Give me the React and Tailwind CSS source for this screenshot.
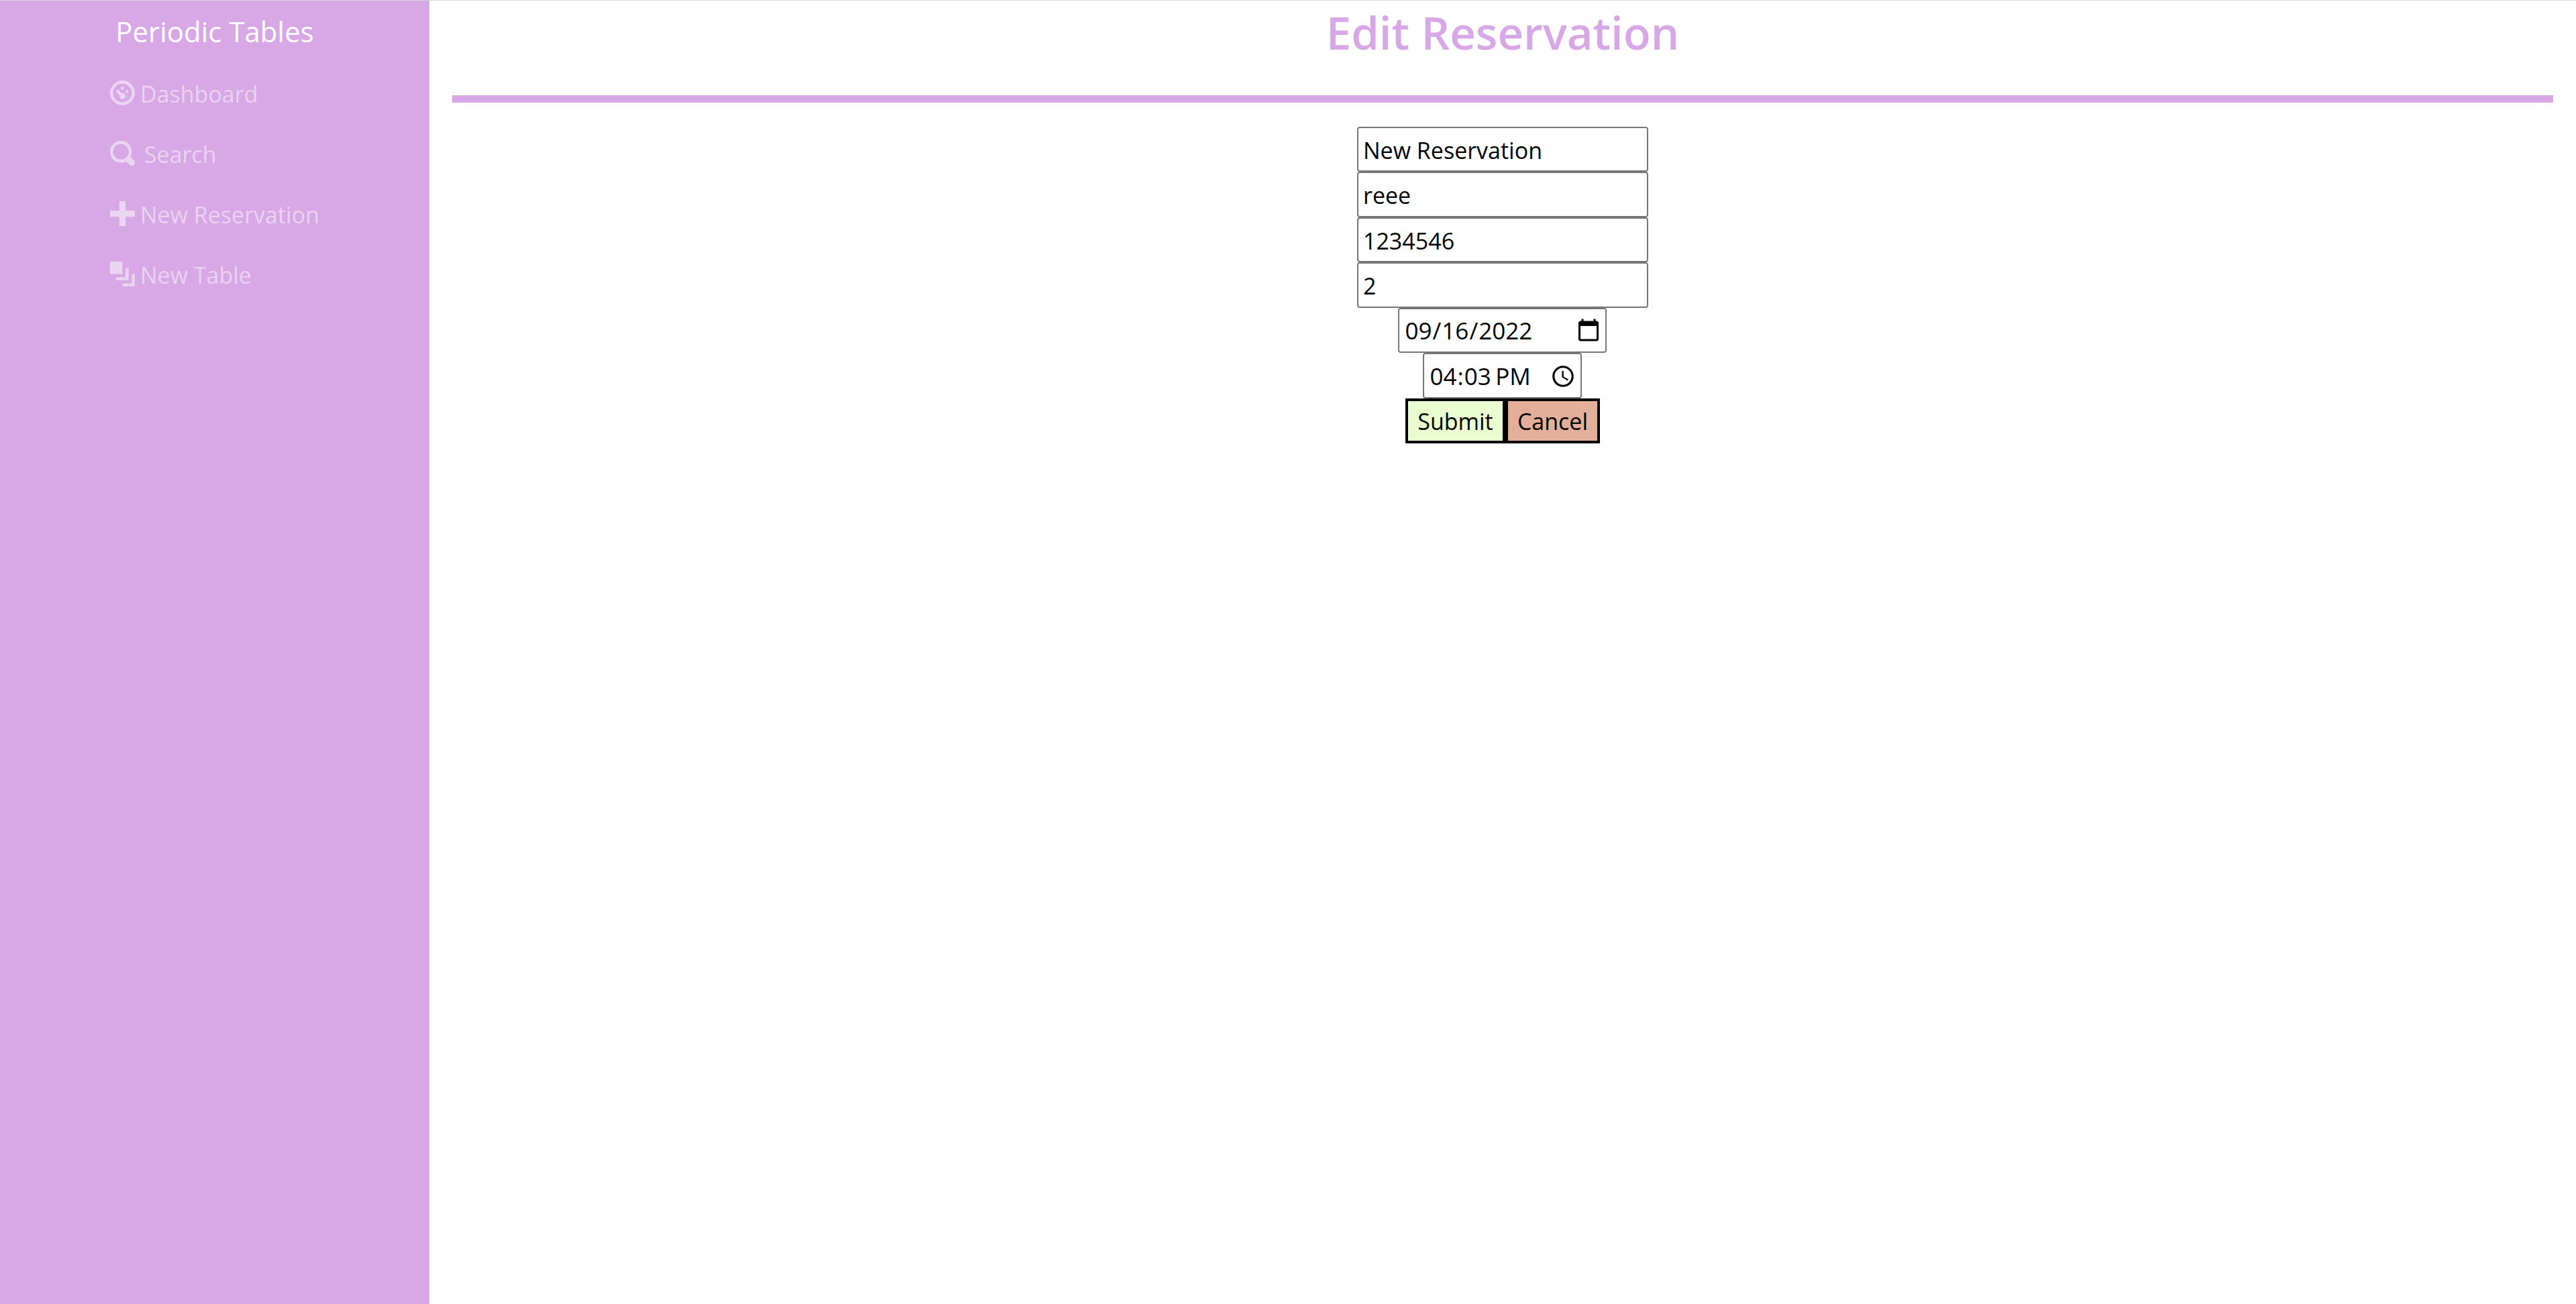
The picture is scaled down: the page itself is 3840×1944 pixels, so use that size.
import { useState } from "react";

const icons = {
  dashboard:
    "M4 0c-2.2 0-4 1.8-4 4s1.8 4 4 4 4-1.8 4-4-1.8-4-4-4zm0 1c1.66 0 3 1.34 3 3s-1.34 3-3 3-3-1.34-3-3 1.34-3 3-3zm0 1c-.28 0-.5.22-.5.5s.22.5.5.5.5-.22.5-.5-.22-.5-.5-.5zm-1.66 1a.5.5 0 0 0-.19.84l.91.91c-.02.08-.06.16-.06.25 0 .55.45 1 1 1s1-.45 1-1-.45-1-1-1c-.09 0-.17.04-.25.06l-.91-.91a.5.5 0 0 0-.44-.16.5.5 0 0 0-.06 0zm3.16 0c-.28 0-.5.22-.5.5s.22.5.5.5.5-.22.5-.5-.22-.5-.5-.5z",
  search:
    "M3.5 0c-1.93 0-3.5 1.57-3.5 3.5s1.57 3.5 3.5 3.5c.59 0 1.17-.14 1.66-.41a1 1 0 0 0 .13.13l1 1a1.02 1.02 0 1 0 1.44-1.44l-1-1a1 1 0 0 0-.16-.13c.27-.49.44-1.06.44-1.66 0-1.93-1.55-3.5-3.5-3.5zm0 1c1.39 0 2.5 1.11 2.5 2.5 0 .66-.24 1.27-.66 1.72-.01.01-.02.02-.03.03a1 1 0 0 0-.13.13c-.44.4-1.04.63-1.69.63-1.39 0-2.5-1.11-2.5-2.5s1.11-2.5 2.5-2.5z",
  plus: "M3 0v3h-3v2h3v3h2v-3h3v-2h-3v-3h-2z",
  layers: "M0 0v4h4v-4h-4zm5 2v3h-3v1h4v-4h-1zm2 2v3h-3v1h4v-4h-1z",
};

const links = [
  { label: "Dashboard", icon: "dashboard", gap: "gap-2" },
  { label: "Search", icon: "search", gap: "gap-[14px]" },
  { label: "New Reservation", icon: "plus", gap: "gap-2" },
  { label: "New Table", icon: "layers", gap: "gap-2" },
];

const fieldClass =
  "h-full rounded-[4px] border-2 border-[#767676] bg-white pl-[7px] pt-[2px] text-black";
const pickerClass =
  "pr-1 text-[35px] [&::-webkit-calendar-picker-indicator]:size-[38px]";

function Sidebar() {
  return (
    <aside className="w-1/6 shrink-0 bg-[#d8a8e6]">
      <nav className="flex flex-col items-center">
        <a href="#home" className="mt-[10px] text-[42px] leading-[72px] text-white">
          Periodic Tables
        </a>
        <ul className="mt-3">
          {links.map((link) => (
            <li key={link.label}>
              <a
                href="#page"
                className={`flex h-[90px] items-center text-white/50 ${link.gap}`}
              >
                <svg viewBox="0 0 8 8" fill="currentColor" className="mb-1 size-[37px]" aria-hidden="true">
                  <path d={icons[link.icon]} />
                </svg>
                {link.label}
              </a>
            </li>
          ))}
        </ul>
      </nav>
    </aside>
  );
}

export default function App() {
  const [form, setForm] = useState({
    first: "New Reservation",
    last: "reee",
    mobile: "1234546",
    people: "2",
    date: "2022-09-16",
    time: "16:03",
  });
  const bind = (name) => ({
    value: form[name],
    onChange: (e) => setForm({ ...form, [name]: e.target.value }),
  });

  return (
    <div className="flex min-h-screen border-t border-[#dadada] bg-white font-['Open_Sans','Noto_Sans',sans-serif] text-[34px] leading-[54px]">
      <Sidebar />
      <main className="min-w-0 grow px-[34px]">
        <h1 className="text-center text-[67px] leading-[94px] font-semibold text-[#d8a8e6]">
          Edit Reservation
        </h1>
        <hr className="mt-[47px] mb-9 h-[11px] border-0 bg-[#d8a8e6]" />
        <form
          className="grid h-[472px] grid-rows-7 justify-items-center"
          onSubmit={(e) => e.preventDefault()}
        >
          <input type="text" aria-label="First name" className={`w-[434px] ${fieldClass}`} {...bind("first")} />
          <input type="text" aria-label="Last name" className={`w-[434px] ${fieldClass}`} {...bind("last")} />
          <input type="tel" aria-label="Mobile number" className={`w-[434px] ${fieldClass}`} {...bind("mobile")} />
          <input type="text" inputMode="numeric" aria-label="People" className={`w-[434px] ${fieldClass}`} {...bind("people")} />
          <input type="date" aria-label="Date" className={`w-[311px] ${fieldClass} ${pickerClass}`} {...bind("date")} />
          <input type="time" aria-label="Time" className={`w-[237px] ${fieldClass} ${pickerClass}`} {...bind("time")} />
          <div className="flex h-full">
            <button type="submit" className="w-[149px] border-4 border-black bg-[#eaffd0] pt-[2px] text-black">
              Submit
            </button>
            <button type="button" className="w-[141px] border-4 border-black bg-[#e3ae9a] pt-[2px] text-black">
              Cancel
            </button>
          </div>
        </form>
      </main>
    </div>
  );
}
